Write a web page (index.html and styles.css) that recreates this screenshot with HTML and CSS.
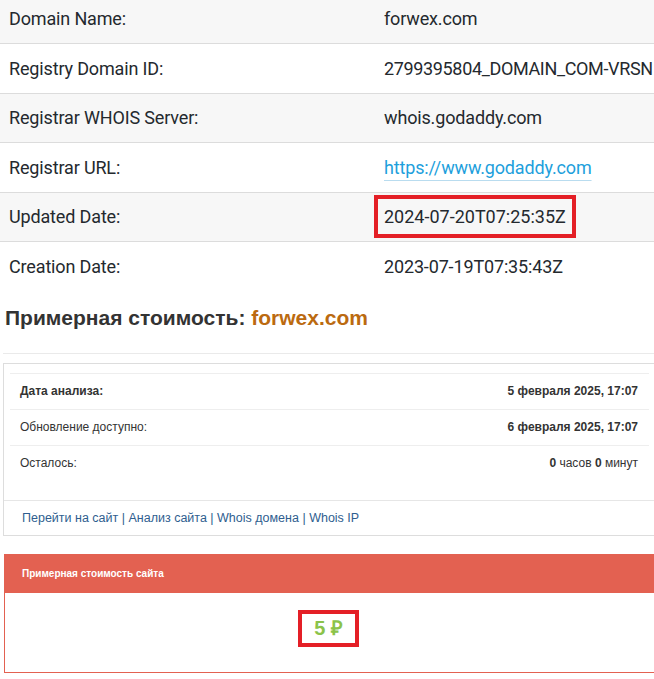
FILE: index.html
```html
<!DOCTYPE html>
<html lang="ru">
<head>
<meta charset="utf-8">
<title>forwex.com</title>
<link rel="stylesheet" href="styles.css">
</head>
<body>
<div class="page">
  <div class="whois">
    <div class="row alt"><div class="k">Domain Name:</div><div class="v">forwex.com</div></div>
    <div class="row"><div class="k">Registry Domain ID:</div><div class="v tight">2799395804_DOMAIN_COM-VRSN</div></div>
    <div class="row alt"><div class="k">Registrar WHOIS Server:</div><div class="v">whois.godaddy.com</div></div>
    <div class="row"><div class="k">Registrar URL:</div><div class="v"><a class="url" href="#">https://www.godaddy.com</a></div></div>
    <div class="row alt"><div class="k">Updated Date:</div><div class="v"><span class="hl">2024-07-20T07:25:35Z</span></div></div>
    <div class="row"><div class="k">Creation Date:</div><div class="v">2023-07-19T07:35:43Z</div></div>
  </div>

  <h2 class="title">Примерная стоимость: <span class="dom">forwex.com</span></h2>
  <div class="sep"></div>

  <div class="box">
    <div class="info">
      <div class="irow"><span class="lab"><b>Дата анализа:</b></span><span class="val"><b>5 февраля 2025, 17:07</b></span></div>
      <div class="irow"><span class="lab">Обновление доступно:</span><span class="val"><b>6 февраля 2025, 17:07</b></span></div>
      <div class="irow"><span class="lab">Осталось:</span><span class="val"><b>0</b> часов <b>0</b> минут</span></div>
    </div>
    <div class="links"><a href="#">Перейти на сайт</a> | <a href="#">Анализ сайта</a> | <a href="#">Whois домена</a> | <a href="#">Whois IP</a></div>
  </div>

  <div class="panel">
    <div class="panel-h">Примерная стоимость сайта</div>
    <div class="panel-b"><span class="price">5 ₽</span></div>
  </div>
</div>
</body>
</html>
```

FILE: styles.css
```css
html, body {
  margin: 0;
  padding: 0;
  background: #fff;
  overflow: hidden;
}
.page {
  width: 654px;
  overflow: hidden;
  height: 679px;
}
.whois {
  margin-top: -7px;
  font-family: Roboto, "Liberation Sans", sans-serif;
  font-size: 18px;
  letter-spacing: -0.15px;
  color: #24292e;
}
.row {
  display: grid;
  grid-template-columns: 375px 1fr;
  align-items: center;
  height: 49.5px;
  box-sizing: border-box;
  border-top: 1px solid #dcdcdc;
  white-space: nowrap;
}
.row:first-child { border-top: none; height: 50px; }
.row.alt { background: #f7f7f7; }
.k { padding-left: 9px; }
.v { padding-left: 9px; }
.v.tight { letter-spacing: -0.35px; }
.url {
  color: #1e9fdc;
  text-decoration: underline;
  text-decoration-color: #b9dcef;
  text-underline-offset: 6px;
  text-decoration-thickness: 1px;
}
.hl {
  letter-spacing: 0;
  padding: 1px 0;
  outline: 4px solid #e41f26;
  outline-offset: 6px;
}
.title {
  margin: 14px 0 0 5px;
  font-family: "Liberation Sans", Arial, sans-serif;
  font-size: 21px;
  line-height: 25px;
  font-weight: bold;
  color: #333;
}
.dom { color: #bb6a10; }
.sep {
  margin: 23px 0 0 3px;
  border-top: 1px solid #eaeaea;
}
.box {
  margin: 9px 0 0 3px;
  width: 670px;
  border: 1px solid #dddddd;
  padding-top: 9px;
  font-family: "Liberation Sans", Arial, sans-serif;
  font-size: 12px;
  color: #333;
}
.info {
  margin: 0 25px 19px 6px;
}
.irow {
  display: flex;
  justify-content: space-between;
  align-items: center;
  height: 36px;
  box-sizing: border-box;
  border-top: 1px solid #eeeeee;
  padding: 0 11px 0 10px;
}
.links {
  border-top: 1px solid #e6e6e6;
  height: 34px;
  line-height: 34px;
  padding-left: 18px;
  color: #2f5e8f;
  font-size: 12.5px;
}
.links a { color: #2f5e8f; text-decoration: none; }
.panel {
  margin: 18px 0 0 4px;
  width: 660px;
  font-family: "Liberation Sans", Arial, sans-serif;
}
.panel-h {
  background: #e36151;
  color: #fff;
  font-size: 10px;
  font-weight: bold;
  height: 39px;
  display: flex;
  align-items: center;
  padding-left: 18px;
}
.panel-b {
  border-left: 1px solid #e36151;
  border-bottom: 1px solid #e36151;
  height: 80px;
  box-sizing: border-box;
  padding-top: 17px;
  padding-right: 12px;
  text-align: center;
}
.price {
  display: inline-block;
  border: 4px solid #e41f26;
  padding: 3px 12px;
  font-size: 20px;
  line-height: 23px;
  font-weight: bold;
  color: #8bc34a;
}
```
